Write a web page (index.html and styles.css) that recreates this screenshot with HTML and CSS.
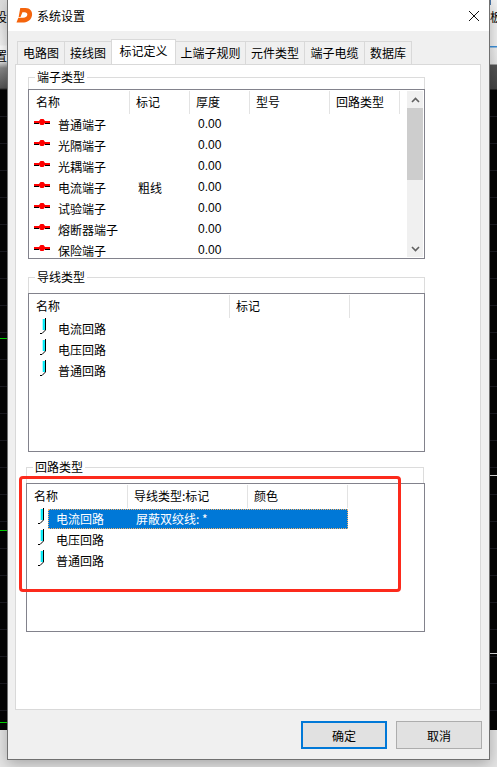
FILE: index.html
```html
<!DOCTYPE html>
<html lang="zh">
<head>
<meta charset="utf-8">
<title>系统设置</title>
<link rel="stylesheet" href="styles.css">
</head>
<body>
<svg width="0" height="0" class="defs">
  <symbol id="term" viewBox="0 0 16 8"><path d="M0 3H5L6.500 1H9.500L11 3H16V5H11L9.500 7H6.500L5 5H0Z" fill="#f00"/><path d="M0 5.500H5M11 5.500H16" stroke="#000" stroke-width="1"/></symbol>
  <symbol id="wire" viewBox="0 0 7 17"><path d="M4.800 1V12" stroke="#00e8f4" stroke-width="2.200"/><path d="M6.500 0V12L3 15.500H1" fill="none" stroke="#000" stroke-width="1"/></symbol>
</svg>

<div class="backdrop">
  <div class="bd-left">
    <span class="bd-t1">设</span><span class="bd-t2">置</span>
    <i class="bd-line bd-green g1"></i><i class="bd-line bd-green g2"></i><i class="bd-line bd-green g3"></i>
    <div class="bd-foot"></div>
  </div>
  <div class="bd-right">
    <span class="bd-t3">板</span>
    <i class="bd-blue"></i>
    <i class="bd-line bd-white w1"></i><i class="bd-line bd-white w2"></i>
    <div class="bd-foot"></div>
  </div>
</div>

<main class="dialog">
  <header class="titlebar">
    <svg class="logo" viewBox="0 0 18 18" width="17" height="17"><path d="M4.500 1H10C15 1 17.500 4.500 17 8.500C16.500 13 13 16 8.500 16.500H0.500L2.500 11.500H7.500C10.500 11.500 11.800 10 12 8.300C12.200 6.500 11 5.500 9 5.500H6.800L4.800 10.500H2.800Z" fill="#f4640c"/></svg>
    <span class="title">系统设置</span>
    <svg class="close" viewBox="0 0 10 10" width="10" height="10"><path d="M0 0L10 10M10 0L0 10" stroke="#111" stroke-width="1" fill="none"/></svg>
  </header>

  <div class="content">
    <nav class="tabs">
      <span class="tab t47">电路图</span>
      <span class="tab t47">接线图</span>
      <span class="tab tab-active">标记定义</span>
      <span class="tab t70">上端子规则</span>
      <span class="tab t59">元件类型</span>
      <span class="tab t60">端子电缆</span>
      <span class="tab t47">数据库</span>
    </nav>

    <section class="panel">
      <fieldset class="group group-terminal">
        <legend>端子类型</legend>
        <div class="list list-terminal">
          <div class="head">
            <span class="col c94">名称</span><span class="col c59">标记</span><span class="col c60">厚度</span><span class="col c80">型号</span><span class="col c70">回路类型</span>
          </div>
          <div class="row"><span class="cell c94 name"><svg class="ico-term"><use href="#term"/></svg>普通端子</span><span class="cell c59"></span><span class="cell c60 num">0.00</span></div>
          <div class="row"><span class="cell c94 name"><svg class="ico-term"><use href="#term"/></svg>光隔端子</span><span class="cell c59"></span><span class="cell c60 num">0.00</span></div>
          <div class="row"><span class="cell c94 name"><svg class="ico-term"><use href="#term"/></svg>光耦端子</span><span class="cell c59"></span><span class="cell c60 num">0.00</span></div>
          <div class="row"><span class="cell c94 name"><svg class="ico-term"><use href="#term"/></svg>电流端子</span><span class="cell c59 mark">粗线</span><span class="cell c60 num">0.00</span></div>
          <div class="row"><span class="cell c94 name"><svg class="ico-term"><use href="#term"/></svg>试验端子</span><span class="cell c59"></span><span class="cell c60 num">0.00</span></div>
          <div class="row"><span class="cell c94 name"><svg class="ico-term"><use href="#term"/></svg>熔断器端子</span><span class="cell c59"></span><span class="cell c60 num">0.00</span></div>
          <div class="row"><span class="cell c94 name"><svg class="ico-term"><use href="#term"/></svg>保险端子</span><span class="cell c59"></span><span class="cell c60 num">0.00</span></div>
          <div class="scrollbar">
            <svg class="arrow" viewBox="0 0 9 6" width="9" height="6"><path d="M1 5L4.500 1.500L8 5" fill="none" stroke="#606060" stroke-width="1.600"/></svg>
            <div class="thumb"></div>
            <svg class="arrow arrow-down" viewBox="0 0 9 6" width="9" height="6"><path d="M1 1L4.500 4.500L8 1" fill="none" stroke="#606060" stroke-width="1.600"/></svg>
          </div>
        </div>
      </fieldset>

      <fieldset class="group group-wire">
        <legend>导线类型</legend>
        <div class="list list-wire">
          <div class="head"><span class="col c193">名称</span><span class="col c120">标记</span></div>
          <div class="row"><span class="cell name"><svg class="ico-wire"><use href="#wire"/></svg>电流回路</span></div>
          <div class="row"><span class="cell name"><svg class="ico-wire"><use href="#wire"/></svg>电压回路</span></div>
          <div class="row"><span class="cell name"><svg class="ico-wire"><use href="#wire"/></svg>普通回路</span></div>
        </div>
      </fieldset>

      <fieldset class="group group-circuit">
        <legend>回路类型</legend>
        <div class="list list-circuit">
          <div class="head"><span class="col c93">名称</span><span class="col c120">导线类型:标记</span><span class="col c100">颜色</span></div>
          <div class="row"><svg class="ico-wire"><use href="#wire"/></svg><div class="sel"><span class="sel-name">电流回路</span><span>屏蔽双绞线: *</span></div></div>
          <div class="row"><span class="cell name"><svg class="ico-wire"><use href="#wire"/></svg>电压回路</span></div>
          <div class="row"><span class="cell name"><svg class="ico-wire"><use href="#wire"/></svg>普通回路</span></div>
        </div>
      </fieldset>
    </section>

    <footer class="actions">
      <button class="btn btn-default" type="button">确定</button>
      <button class="btn" type="button">取消</button>
    </footer>
  </div>
  <div class="annotation"></div>
</main>
</body>
</html>
```

FILE: styles.css
```css
* { box-sizing: border-box; }
html, body { margin: 0; padding: 0; }
body {
  width: 497px; height: 767px; overflow: hidden; position: relative;
  background: #e6e6e6;
  font: 12px/17px "Noto Sans CJK SC", "Liberation Sans", sans-serif;
  color: #000;
}
.defs { position: absolute; }

/* what lies behind the dialog */
.backdrop { position: absolute; inset: 0; }
.bd-left, .bd-right { position: absolute; top: 0; height: 767px; overflow: hidden; }
.bd-left {
  left: 0; width: 8px;
  background:
    repeating-linear-gradient(transparent 0, transparent 26px, #1c1c22 26px, #1c1c22 27px) 0 90px no-repeat,
    linear-gradient(#dcdcdc 0, #f4f4f4 45px, #fff 46px, #fff 60px, #8a8a8a 68px, #555 88px, #050505 90px);
}
.bd-right {
  left: 489px; width: 8px;
  background:
    repeating-linear-gradient(transparent 0, transparent 26px, #1c1c22 26px, #1c1c22 27px) 0 90px no-repeat,
    linear-gradient(#f2f2f2 0, #f2f2f2 46px, #3d8fd8 46px, #3d8fd8 47px, #f0f0f0 48px, #e8e8e8 64px, #555 65px, #444 89px, #050505 90px);
}
.bd-t1, .bd-t2, .bd-t3 { position: absolute; font-size: 12px; }
.bd-t1 { left: -5px; top: 8px; }
.bd-t2 { left: -5px; top: 47px; }
.bd-t3 { left: 1px; top: 8px; }
.bd-blue { position: absolute; left: 0; top: 0; width: 2px; height: 5px; background: #4a76a8; }
.bd-line { position: absolute; left: 0; width: 8px; height: 1px; }
.bd-green { background: #00e000; }
.g1 { top: 338px; } .g2 { top: 530px; } .g3 { top: 722px; }
.bd-white { background: #e0e0e0; }
.w1 { top: 475px; } .w2 { top: 653px; }
.bd-foot { position: absolute; left: 0; right: 0; top: 730px; bottom: 0; background: #e6e6e6; }

/* dialog */
.dialog {
  position: absolute; left: 7px; top: 0; width: 483px; height: 760px;
  background: #f0f0f0; border: 1px solid #707070; border-top: 0;
  box-shadow: 0 4px 14px rgba(0,0,0,.28);
}
.titlebar { display: flex; align-items: center; height: 31px; background: #fff; padding: 0 10px 0 8px; }
.logo { flex: none; }
.title { margin-left: 4px; flex: 1; }
.close { flex: none; }
.content { padding: 9px 8px 0 8px; }

/* tabs */
.tabs { display: flex; height: 24px; padding-left: 1px; align-items: flex-end; position: relative; z-index: 1; }
.tab {
  display: block; height: 23px; line-height: 22px; text-align: center; white-space: nowrap;
  background: #f0f0f0; border: 1px solid #d9d9d9; border-bottom: 0; margin-right: -1px;
}
.t47 { width: 48px; }
.t70 { width: 71px; }
.t59 { width: 60px; }
.t60 { width: 61px; }
.tab-active {
  width: 65px; height: 25px; background: #fff; margin-bottom: -1px; line-height: 22px; position: relative; top: -1px; margin-top: -1px;
}

/* panel */
.panel { width: 466px; height: 646px; margin-left: -1px; background: #fff; border: 1px solid #d9d9d9; padding: 0 0 0 10px; }
.group {
  display: block; min-width: 0; margin: 0; padding: 0; border: 1px solid #dcdcdc;
  position: relative; width: 397px;
}
.group legend { margin-left: 6px; padding: 0 2px; line-height: 14px; height: 14px; }
.group-terminal { margin-left: 2px; margin-top: 5px; height: 183px; }
.group-wire { margin-left: 2px; margin-top: 17px; height: 176px; }
.group-circuit { margin-top: 14px; margin-left: 0; width: 398px; height: 165px; }

.list { border: 1px solid #82828c; background: #fff; position: relative; overflow: hidden; width: 397px; margin-left: -1px; }
.list-terminal { height: 170px; margin-top: 5px; }
.list-wire { height: 159px; margin-top: 9px; }
.list-circuit { height: 149px; margin-top: 9px; margin-left: -1px; width: 399px; }

.head { display: flex; height: 24px; padding-top: 1px; }
.col { display: block; height: 23px; line-height: 22px; padding-left: 7px; border-right: 1px solid #e3e3e3; flex: none; white-space: nowrap; }
.col + .col { padding-left: 6px; }
.c94 { width: 101px; } .c59 { width: 60px; } .c60 { width: 60px; } .c80 { width: 80px; } .c70 { width: 70px; }
.c120 { width: 120px; } .c100 { width: 100px; }
.c193 { width: 201px; }
.c93 { width: 101px; }

.row { display: flex; height: 21px; align-items: center; line-height: 21px; white-space: nowrap; }
.cell { display: block; flex: none; }
.name { display: flex; align-items: center; padding-left: 5px; }
.mark { padding-left: 8px; }
.num { padding-left: 8px; font-family: "Liberation Sans", sans-serif; font-size: 12px; }
.ico-term { width: 16px; height: 8px; margin-right: 8px; flex: none; position: relative; top: -3px; }
.ico-wire { width: 7px; height: 17px; margin: 0 12px 0 4px; flex: none; position: relative; top: -2px; }
.list-wire .name { padding-left: 0; margin-left: 6px; }
.list-circuit .name { margin-left: 6px; padding-left: 0; }
.list-circuit .row > .ico-wire { margin: 0 0 0 10px; }
.sel {
  display: flex; margin-left: 4px; width: 300px; height: 20px; line-height: 20px;
  background: #0078d7; color: #fff; outline: 1px dotted #f6b26b; outline-offset: -1px;
}
.sel-name { width: 80px; padding-left: 8px; flex: none; }
.sel span:last-child { padding-left: 8px; }

.scrollbar {
  position: absolute; right: 1px; top: 1px; bottom: 1px; width: 16px; background: #f0f0f0;
  display: flex; flex-direction: column; align-items: center;
}
.arrow { flex: none; margin: 6px 0 5px; }
.arrow-down { margin: auto 0 5px; }
.thumb { width: 16px; height: 72px; background: #cdcdcd; flex: none; }

/* footer */
.actions { display: flex; justify-content: flex-end; gap: 9px; padding: 11px 0 0; margin-right: -1px; }
.btn {
  width: 86px; height: 28px; padding: 0; margin: 0; font: inherit; color: #000;
  background: #e1e1e1; border: 1px solid #adadad; border-radius: 0;
}
.btn-default { border: 2px solid #0078d7; }

/* red hand-drawn annotation over the lower list */
.annotation {
  position: absolute; left: 11px; top: 476px; width: 382px; height: 116px;
  border: 3px solid #fc2a1c; border-radius: 4px; pointer-events: none;
}
```
